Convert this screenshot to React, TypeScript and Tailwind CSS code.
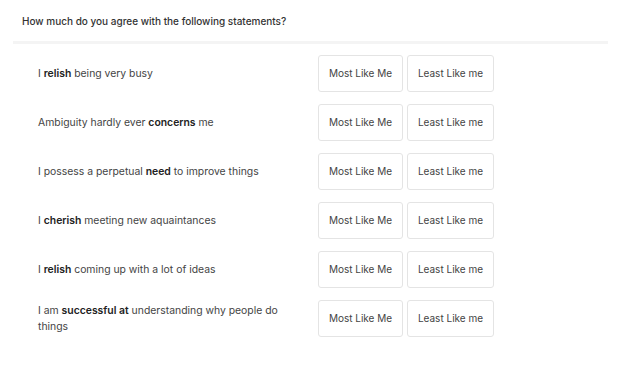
import React from 'react';

const statements: { before: string; bold: string; after: string }[] = [
  { before: 'I ', bold: 'relish', after: ' being very busy' },
  { before: 'Ambiguity hardly ever ', bold: 'concerns', after: ' me' },
  { before: 'I possess a perpetual ', bold: 'need', after: ' to improve things' },
  { before: 'I ', bold: 'cherish', after: ' meeting new aquaintances' },
  { before: 'I ', bold: 'relish', after: ' coming up with a lot of ideas' },
  { before: 'I am ', bold: 'successful at', after: ' understanding why people do things' },
];

export default function App() {
  return (
    <div className="w-[624px] h-[365px] bg-white font-['Inter',sans-serif] text-[10px] text-[#444]">
      <div className="h-[41px] px-[22px] pt-[15px]">
        <h2 className="text-[10px] leading-[12px] font-medium text-[#333]">
          How much do you agree with the following statements?
        </h2>
      </div>
      <div className="ml-[13px] mr-[16px] h-[3px] bg-[#f4f4f4]" />

      <div className="pt-[11px] pl-[38px] flex flex-col gap-[12px]">
        {statements.map((s, i) => (
          <div key={i} className="flex items-center">
            <p className="w-[280px] pr-[40px] text-[10.4px] leading-[16px]">
              {s.before}
              <span className="font-semibold text-[#222]">{s.bold}</span>
              {s.after}
            </p>
            <div className="flex gap-[4px]">
              <button className="w-[85px] h-[37px] border border-[#e4e4e4] rounded-[3px] bg-white text-[#444]">
                Most Like Me
              </button>
              <button className="w-[87px] h-[37px] border border-[#e4e4e4] rounded-[3px] bg-white text-[#444]">
                Least Like me
              </button>
            </div>
          </div>
        ))}
      </div>
    </div>
  );
}
